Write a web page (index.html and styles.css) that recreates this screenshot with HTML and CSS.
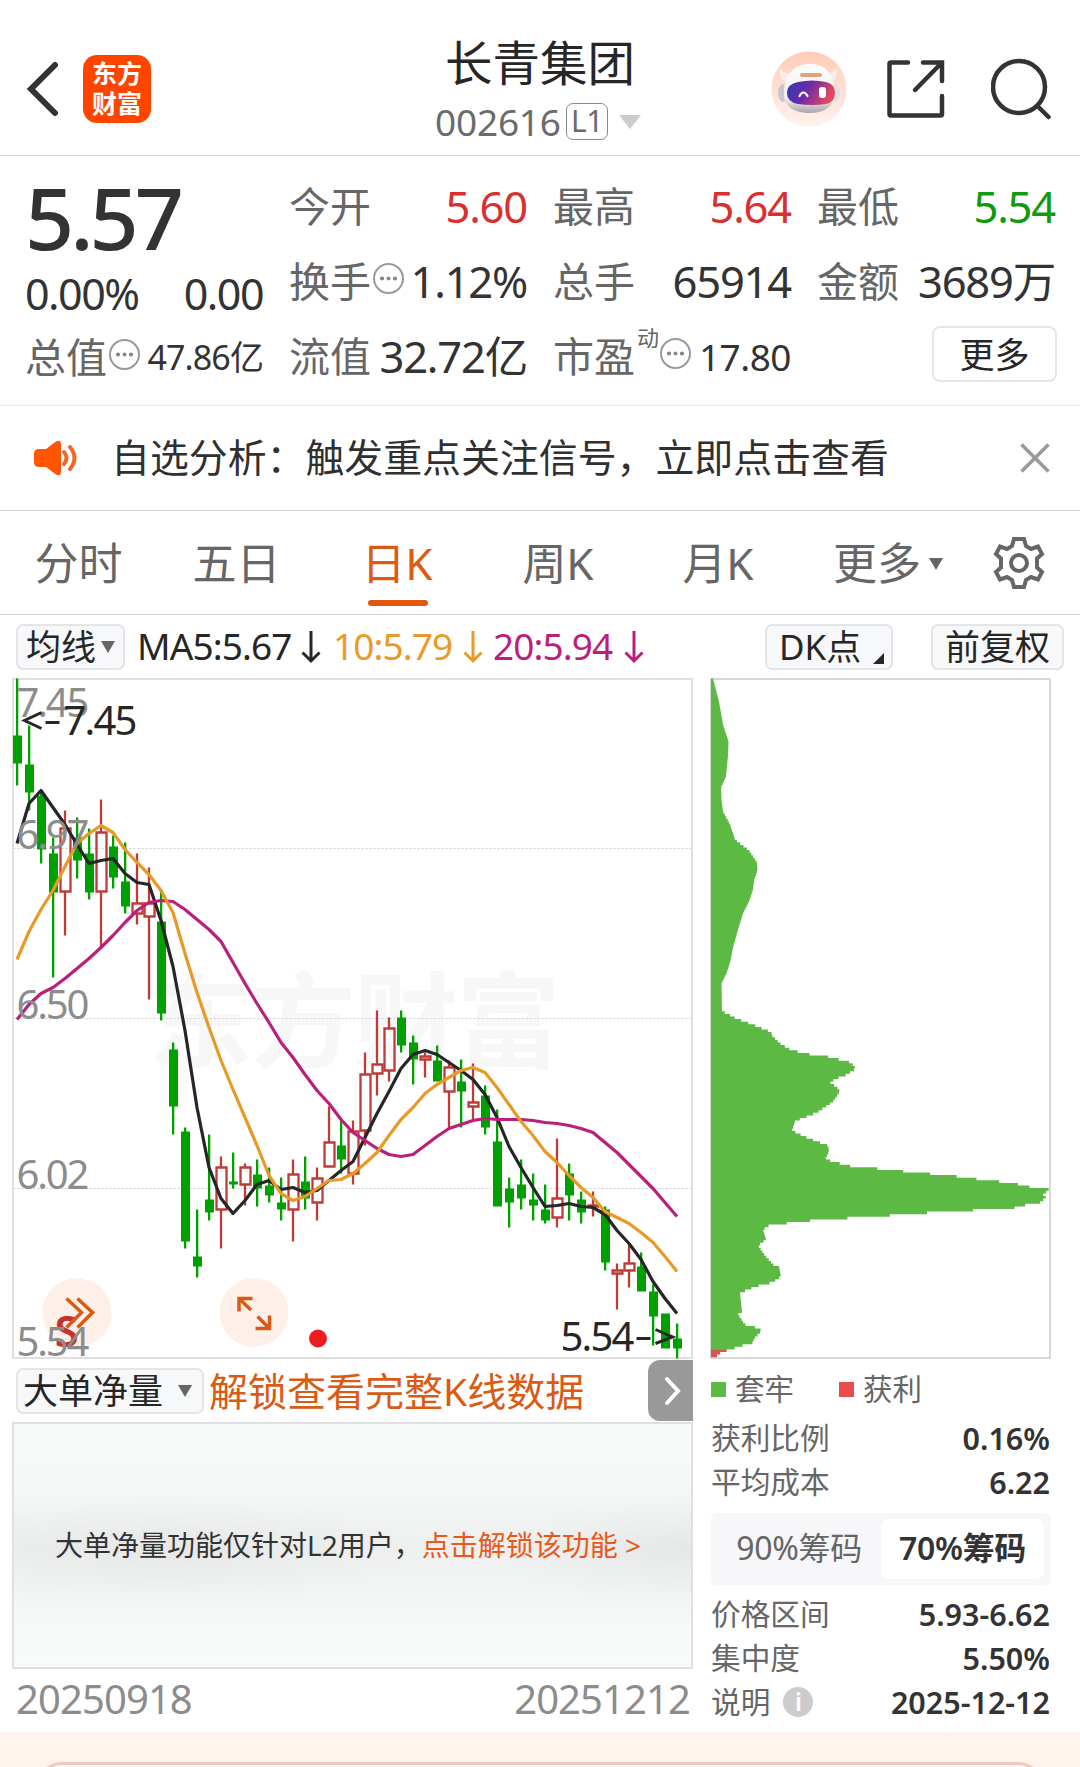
FILE: index.html
```html
<!DOCTYPE html>
<html lang="zh-CN">
<head>
    <meta charset="UTF-8">
    <title>长青集团 002616</title>
    <link rel="stylesheet" href="styles.css">
</head>
<body>
    <!-- Header -->
    <header class="header">
        <div class="header-left">
            <svg class="back" width="34" height="56" viewBox="0 0 34 56"><path d="M29 4 L5 28 L29 52"/></svg>
            <div class="logo"><span>东方</span><span>财富</span></div>
        </div>
        <div class="header-title">
            <h1>长青集团</h1>
            <div class="code">
                <span class="code-num">002616</span>
                <span class="level">L1</span>
                <span class="tri tri-light"></span>
            </div>
        </div>
        <div class="header-icons">
            <svg class="robot" width="76" height="76" viewBox="0 0 76 76">
                <defs>
                    <linearGradient id="skin" x1="0" y1="0" x2="0" y2="1">
                        <stop offset="0" stop-color="#ffccb5"/><stop offset="1" stop-color="#fff3ee"/>
                    </linearGradient>
                    <linearGradient id="visor" x1="0" y1="0" x2="1" y2="0.3">
                        <stop offset="0" stop-color="#2c3bb5"/><stop offset="0.5" stop-color="#6f2aa5"/><stop offset="1" stop-color="#e0485f"/>
                    </linearGradient>
                    <linearGradient id="shell" x1="0" y1="0" x2="0" y2="1">
                        <stop offset="0" stop-color="#ffffff"/><stop offset="0.7" stop-color="#eeeef0"/><stop offset="1" stop-color="#aaa5aa"/>
                    </linearGradient>
                </defs>
                <circle cx="38" cy="38" r="37.5" fill="url(#skin)"/>
                <path d="M9 17 Q7 26 14 30 L20 22 Q12 23 9 17Z M65 17 Q68 26 61 30 L54 22 Q62 23 65 17Z" fill="#f6efee"/>
                <ellipse cx="12" cy="42" rx="5" ry="9" fill="#cbc6cc"/>
                <ellipse cx="65" cy="42" rx="4" ry="8" fill="#e2dde0"/>
                <path d="M39 13 C54 13 60 22 63 33 C67 50 60 61 40 62 C22 62 12 55 13 41 C14 24 22 13 39 13Z" fill="url(#shell)"/>
                <rect x="29" y="22" width="22" height="4" rx="2" fill="#dca679"/>
                <path d="M27 31 Q41 28 55 31 Q64 33 64 42 Q64 51 55 53 Q41 55 27 53 Q16 51 16 42 Q16 33 27 31Z" fill="url(#visor)"/>
                <path d="M28.500 45 Q32.500 38 36.500 45" fill="none" stroke="#fff" stroke-width="2.200" stroke-linecap="round"/>
                <rect x="48" y="36" width="7" height="11" rx="3" fill="#fff"/>
            </svg>
            <svg class="line-icon share" width="60" height="60" viewBox="0 0 60 60">
                <path d="M22 3.500 H5 Q3.500 3.500 3.500 5 V55 Q3.500 56.500 5 56.500 H54.500 Q56 56.500 56 55 V37"/>
                <path d="M37 3.500 H56 V22 M56 3.500 L29 31"/>
            </svg>
            <svg class="line-icon search" width="60" height="62" viewBox="0 0 60 62">
                <circle cx="28" cy="29" r="26"/><path d="M46.500 48 L57.500 59"/>
            </svg>
        </div>
    </header>

    <!-- Quote -->
    <section class="quote">
        <div class="quote-main">
            <div class="price">5.57</div>
            <div class="change"><span>0.00%</span><span>0.00</span></div>
            <div class="cell cap"><span class="label">总值</span><i class="more-dot"></i><span class="value small">47.86亿</span></div>
        </div>
        <div class="quote-grid">
            <div class="cell"><span class="label">今开</span><span class="value up">5.60</span></div>
            <div class="cell"><span class="label">最高</span><span class="value up">5.64</span></div>
            <div class="cell"><span class="label">最低</span><span class="value down">5.54</span></div>
            <div class="cell"><span class="label">换手</span><i class="more-dot"></i><span class="value">1.12%</span></div>
            <div class="cell"><span class="label">总手</span><span class="value">65914</span></div>
            <div class="cell"><span class="label">金额</span><span class="value">3689万</span></div>
            <div class="cell"><span class="label">流值</span><span class="value">32.72亿</span></div>
            <div class="cell"><span class="label">市盈</span><sup>动</sup><i class="more-dot"></i><span class="value mid">17.80</span></div>
            <div class="cell"><button class="more-btn">更多</button></div>
        </div>
    </section>

    <!-- Notice -->
    <section class="notice">
        <svg class="speaker" width="46" height="38" viewBox="0 0 46 38">
            <path d="M6 10 H13 L23 2.500 Q28 0 28 6 V32 Q28 38 23 35.500 L13 28 H6 Q1 28 1 23 V15 Q1 10 6 10Z" fill="#ff5500"/>
            <path d="M31 13 Q36 19 31 25 M37 8 Q46 19 37 30" fill="none" stroke="#f0692a" stroke-width="4" stroke-linecap="round"/>
        </svg>
        <p>自选分析：触发重点关注信号，立即点击查看</p>
        <svg class="close" width="30" height="30" viewBox="0 0 30 30"><path d="M1.500 1.500 L28.500 28.500 M28.500 1.500 L1.500 28.500"/></svg>
    </section>

    <!-- Period tabs -->
    <nav class="tabs">
        <a>分时</a>
        <a>五日</a>
        <a class="active">日K</a>
        <a>周K</a>
        <a>月K</a>
        <a>更多<span class="tri"></span></a>
        <svg class="gear" width="54" height="54" viewBox="-27 -27 54 54">
            <path d="M-5 -24 H5 L7 -17 L12 -14 L19 -16.500 L23 -9 L18 -4.500 V4.500 L23 9 L19 16.500 L12 14 L7 17 L5 24 H-5 L-7 17 L-12 14 L-19 16.500 L-23 9 L-18 4.500 V-4.500 L-23 -9 L-19 -16.500 L-12 -14 L-7 -17Z"/>
            <circle r="8"/>
        </svg>
    </nav>

    <!-- Moving averages -->
    <div class="ma-bar">
        <button class="chip ma-btn">均线<span class="tri"></span></button>
        <span class="ma ma5">MA5:5.67</span>
        <svg class="arrow ma5" width="20" height="34" viewBox="0 0 20 34"><path d="M10 1 V31 M1.500 22.500 L10 31 L18.500 22.500"/></svg>
        <span class="ma ma10">10:5.79</span>
        <svg class="arrow ma10" width="20" height="34" viewBox="0 0 20 34"><path d="M10 1 V31 M1.500 22.500 L10 31 L18.500 22.500"/></svg>
        <span class="ma ma20">20:5.94</span>
        <svg class="arrow ma20" width="20" height="34" viewBox="0 0 20 34"><path d="M10 1 V31 M1.500 22.500 L10 31 L18.500 22.500"/></svg>
        <button class="chip dk-btn">DK点<span class="corner"></span></button>
        <button class="chip fq-btn">前复权</button>
    </div>

    <main class="content">
        <div class="left">
            <svg class="kline" id="kline" width="681" height="681" viewBox="11.500 677.500 681 681">
                <text class="watermark" x="148" y="1059" textLength="412">东方财富</text>
                <path class="grid-line" d="M13 848 H692 M13 1018 H692 M13 1188 H692"/>
                <rect class="frame" x="12.500" y="678.500" width="679" height="679"/>
                <g id="candles"></g>
                <g id="lines"></g>
                <circle cx="76.500" cy="1312" r="34.500" class="bubble"/>
                <circle cx="253.500" cy="1312" r="34.500" class="bubble"/>
                <text class="sell" x="54" y="1346">S</text>
                <path class="bubble-icon" d="M66 1298 L81 1312 L66 1327 M77 1298 L92 1312 L77 1327"/>
                <path class="bubble-icon" d="M238.500 1311 V1298 H252 M239 1298.500 L250.500 1309.500 M255 1328 H269 V1315 M268.500 1327.500 L257 1316"/>
                <circle cx="317.500" cy="1338" r="9" fill="#ee1c1c"/>
                <g class="axis">
                    <text x="16" y="716" textLength="73">7.45</text>
                    <text x="16" y="848" textLength="73">6.97</text>
                    <text x="16" y="1018" textLength="73">6.50</text>
                    <text x="16" y="1188" textLength="73">6.02</text>
                    <text x="16" y="1355" textLength="73">5.54</text>
                </g>
                <text class="mark" x="63" y="734" textLength="74">7.45</text>
                <text class="mark" x="560" y="1350" textLength="74">5.54</text>
                <path class="mark-arrow" d="M41 712 L24 720 L41 728 M45 722 H59 M655 1329 L672 1336.500 L655 1343 M636 1338 H650"/>
            </svg>

            <div class="sub-bar">
                <button class="chip vol-btn">大单净量<span class="tri"></span></button>
                <span class="unlock">解锁查看完整K线数据</span>
                <span class="next"><svg width="18" height="30" viewBox="0 0 18 30"><path d="M3 3 L14 15 L3 27"/></svg></span>
            </div>

            <div class="locked">
                <span>大单净量功能仅针对L2用户，</span><a>点击解锁该功能 &gt;</a>
            </div>

            <div class="dates"><span>20250918</span><span>20251212</span></div>
        </div>

        <aside class="right">
            <svg class="chips" id="chips" width="341" height="681" viewBox="709.500 677.500 341 681">
                <rect class="chips-frame" x="710.500" y="678.500" width="339" height="679"/>
                <path id="chips-green" fill="#5bb944"/>
                <path id="chips-red" fill="#d9534f"/>
            </svg>
            <div class="legend">
                <i class="sq green"></i><span>套牢</span>
                <i class="sq red"></i><span>获利</span>
            </div>
            <div class="stat"><span>获利比例</span><b>0.16%</b></div>
            <div class="stat"><span>平均成本</span><b>6.22</b></div>
            <div class="switch">
                <span>90%筹码</span>
                <span class="on">70%筹码</span>
            </div>
            <div class="stat"><span>价格区间</span><b>5.93-6.62</b></div>
            <div class="stat"><span>集中度</span><b>5.50%</b></div>
            <div class="stat"><span>说明<i class="info">i</i></span><b>2025-12-12</b></div>
        </aside>
    </main>

    <footer class="footer"><div class="footer-card"></div></footer>

    <script src="chart.js"></script>
</body>
</html>
```

FILE: styles.css
```css
/* Reset and font */
* {
    margin: 0;
    padding: 0;
    box-sizing: border-box;
}

body {
    width: 1080px;
    height: 1767px;
    overflow: hidden;
    background: #fff;
    color: #333;
    font-family: "Noto Sans", "Noto Sans CJK SC", sans-serif;
    line-height: 1;
    white-space: nowrap;
}

button {
    font-family: inherit;
    line-height: 1;
    color: #262626;
}

svg {
    display: block;
    flex-shrink: 0;
}

.tri {
    display: inline-block;
    border: 7px solid transparent;
    border-top: 12px solid #666;
    border-bottom: 0;
}

.tri-light {
    border-width: 14px 11px 0;
    border-top-color: #ccc;
}

/* Header */
.header {
    display: grid;
    grid-template-columns: 360px 360px 360px;
    height: 156px;
    border-bottom: 1px solid #d4d4d4;
}

.header-left {
    display: flex;
    align-items: center;
    padding: 22px 0 0 26px;
}

.back path {
    fill: none;
    stroke: #333;
    stroke-width: 6;
    stroke-linecap: round;
}

.logo {
    display: flex;
    flex-direction: column;
    align-items: center;
    gap: 5px;
    width: 68px;
    height: 68px;
    margin-left: 23px;
    padding-top: 6px;
    border-radius: 14px;
    background: #ff4400;
    color: #fff;
    font-size: 25px;
    font-weight: 700;
}

.header-title {
    padding-top: 39px;
}

h1 {
    font-size: 47.5px;
    font-weight: 400;
    text-align: center;
    color: #262626;
}

.code {
    display: flex;
    align-items: center;
    margin: 16px 0 0 75px;
    color: #6b6b6b;
}

.code-num {
    width: 131px;
    font-size: 37px;
    letter-spacing: -0.2px;
}

.level {
    width: 42px;
    height: 37px;
    border: 1.5px solid #8a8a8a;
    border-radius: 7px;
    font-size: 30px;
    line-height: 33px;
    letter-spacing: -0.5px;
    text-align: center;
}

.code .tri-light {
    margin: 2px 0 0 11px;
}

.header-icons {
    display: flex;
    align-items: center;
    padding: 22px 0 0 51px;
}

.line-icon {
    fill: none;
    stroke: #333;
    stroke-width: 4.5;
    stroke-linecap: round;
}

.share {
    margin-left: 39px;
}

.search {
    margin-left: 45px;
}

/* Quote */
.quote {
    display: flex;
    gap: 26px;
    height: 250px;
    padding-left: 25px;
    border-bottom: 1px solid #e8e8e8;
}

.quote-main {
    width: 238px;
}

.price {
    height: 105px;
    padding-top: 18px;
    font-size: 86px;
    font-weight: 500;
    letter-spacing: -4px;
}

.change {
    display: flex;
    justify-content: space-between;
    height: 63px;
    padding-top: 11px;
    font-size: 43px;
    letter-spacing: -1.5px;
}

.quote-grid {
    display: grid;
    grid-template-columns: 238px 238px 238px;
    grid-template-rows: 75px 75px 75px;
    column-gap: 26px;
    padding-top: 13px;
}

.cell {
    display: flex;
    align-items: center;
}

.cap {
    height: 66px;
}

.label {
    font-size: 41px;
    color: #666;
}

.value {
    margin-left: auto;
    font-size: 43.5px;
    letter-spacing: -1.2px;
}

.value.small {
    font-size: 34px;
    letter-spacing: -0.9px;
}

.value.mid {
    font-size: 37px;
    letter-spacing: -0.5px;
}

.up {
    color: #d9302f;
}

.down {
    color: #109a10;
}

.more-dot {
    width: 31px;
    height: 31px;
    margin: -6px 0 0 2px;
    border: 2px solid #999;
    border-radius: 50%;
    background:
        radial-gradient(circle at 7px 13.5px, #888 1.7px, transparent 2.3px),
        radial-gradient(circle at 13.5px 13.5px, #888 1.7px, transparent 2.3px),
        radial-gradient(circle at 20px 13.5px, #888 1.7px, transparent 2.3px);
}

sup {
    align-self: flex-start;
    margin: 7px -13px 0 2px;
    font-size: 22px;
    color: #666;
}

sup + .more-dot {
    margin-left: 14px;
}

.more-btn {
    width: 125px;
    height: 56px;
    margin: -5px -2px 0 auto;
    border: 2px solid #e6e6e6;
    border-radius: 8px;
    background: #fff;
    font-size: 35px;
}

/* Notice */
.notice {
    display: flex;
    align-items: center;
    height: 105px;
    padding: 0 30px 0 33px;
    border-bottom: 1px solid #d4d4d4;
}

.notice p {
    margin: -2px 0 0 32px;
    font-size: 38.9px;
    color: #303030;
}

.close {
    margin-left: auto;
}

.close path {
    stroke: #999;
    stroke-width: 3.5;
}

/* Tabs */
.tabs {
    display: grid;
    grid-template-columns: 157px 159px 162px 160px 160px 180px 82px;
    align-items: center;
    height: 104px;
    border-bottom: 1px solid #d4d4d4;
}

.tabs a {
    position: relative;
    font-size: 44px;
    text-align: center;
    color: #666;
}

.tabs .active {
    color: #dd5a12;
}

.tabs .active::after {
    content: "";
    position: absolute;
    left: 52px;
    bottom: -21px;
    width: 60px;
    height: 6px;
    border-radius: 3px;
    background: #e3570c;
}

.tabs .tri {
    margin: 0 0 10px 8px;
}

.gear {
    justify-self: center;
    fill: none;
    stroke: #666;
    stroke-width: 4;
}

/* MA bar */
.ma-bar {
    display: flex;
    align-items: center;
    height: 63px;
    padding: 0 16px;
}

.chip {
    display: flex;
    align-items: center;
    height: 46px;
    border: 2px solid #e4e5e9;
    border-radius: 7px;
    background: #f7f8fa;
    font-size: 35px;
}

.ma-btn {
    width: 109px;
    padding-left: 8px;
}

.ma-btn .tri {
    margin-left: 5px;
}

.ma {
    margin-top: -2px;
    font-size: 37px;
    letter-spacing: -0.9px;
}

.ma5 {
    color: #262626;
}

.ma10 {
    color: #ea9a26;
}

.ma20 {
    color: #bb1f7c;
}

.ma.ma5 {
    width: 164px;
    margin-left: 12px;
}

.ma.ma10 {
    width: 130px;
    margin-left: 12px;
}

.ma.ma20 {
    width: 131px;
    margin-left: 10px;
}

.dk-btn {
    width: 128px;
    margin-left: auto;
    padding-left: 12px;
}

.arrow path {
    fill: none;
    stroke: currentColor;
    stroke-width: 3;
}

.fq-btn {
    width: 133px;
    margin-left: 38px;
    padding-left: 12px;
}

.corner {
    align-self: flex-end;
    margin: 0 0 4px 12px;
    border-bottom: 11px solid #262626;
    border-left: 11px solid transparent;
}

/* Charts */
.content {
    display: flex;
    gap: 17px;
    height: 1054px;
    padding-left: 12px;
}

.left {
    width: 681px;
}

.watermark {
    font-size: 104px;
    font-weight: 700;
    fill: #f7f7f7;
}

.frame {
    fill: none;
    stroke: #e0e0e0;
    stroke-width: 2;
}

.grid-line {
    fill: none;
    stroke: #cfcfcf;
    stroke-width: 1;
    stroke-dasharray: 2 2;
}

.axis text {
    font-size: 40px;
    fill: #8c8c8c;
}

.mark {
    font-size: 40px;
    fill: #262626;
}

.mark-arrow {
    fill: none;
    stroke: #262626;
    stroke-width: 3;
}

.bubble {
    fill: #fef0e9;
}

.bubble-icon {
    fill: none;
    stroke: #d85a14;
    stroke-width: 3.5;
}

.sell {
    font-size: 44px;
    font-weight: 600;
    fill: #c9302c;
}

.candle-up {
    fill: none;
    stroke: #c03a3a;
    stroke-width: 2.3;
}

.candle-down {
    fill: #00a000;
    stroke: none;
}

.average {
    fill: none;
    stroke-width: 3.2;
    stroke-linejoin: round;
}

.sub-bar {
    display: flex;
    align-items: center;
    height: 63px;
    padding-left: 4px;
}

.vol-btn {
    width: 188px;
    padding-left: 5px;
}

.vol-btn .tri {
    margin-left: 15px;
}

.unlock {
    margin: -1px 0 0 5px;
    font-size: 39px;
    color: #d95b14;
}

.next {
    display: flex;
    align-items: center;
    justify-content: center;
    width: 45px;
    height: 61px;
    margin-left: auto;
    padding-left: 4px;
    border-radius: 12px 0 0 12px;
    background: #999;
}

.next path {
    fill: none;
    stroke: #fff;
    stroke-width: 4;
    stroke-linecap: round;
}

.locked {
    display: flex;
    align-items: center;
    height: 247px;
    padding: 0 0 2px 41px;
    border: 2px solid #e0e0e0;
    background:
        radial-gradient(ellipse 260px 60px at 22% 53%, rgba(0, 0, 0, 0.035), transparent),
        radial-gradient(ellipse 200px 60px at 100% 53%, rgba(0, 0, 0, 0.035), transparent),
        linear-gradient(#f8f9f9, #f6f7f7 25%, #eeefef 50%, #f6f7f7 78%, #f9fafa);
    font-size: 28px;
}

.locked a {
    color: #e8591a;
}

.dates {
    display: flex;
    justify-content: space-between;
    padding: 10px 3px 0 4px;
    font-size: 40px;
    letter-spacing: -0.9px;
    color: #8c8c8c;
}

/* Chip distribution */
.right {
    width: 341px;
}

.chips-frame {
    fill: none;
    stroke: #ccc;
    stroke-width: 1.5;
}

.legend {
    display: flex;
    align-items: center;
    height: 57px;
    padding: 3px 0 0 1px;
    font-size: 29.5px;
    color: #666;
}

.sq {
    width: 15px;
    height: 15px;
    margin-right: 9px;
}

.green {
    background: #5bb944;
}

.red {
    margin-left: 45px;
    background: #e84b4b;
}

.stat {
    display: flex;
    align-items: center;
    justify-content: space-between;
    height: 44px;
    padding: 0 1px;
    font-size: 29.7px;
    color: #666;
}

.stat span {
    display: flex;
    align-items: center;
}

.stat b {
    font-size: 30.5px;
    font-weight: 600;
    color: #333;
}

.info {
    width: 30px;
    height: 30px;
    margin-left: 13px;
    border-radius: 50%;
    background: #ccc;
    color: #fff;
    font-size: 26px;
    font-style: normal;
    font-weight: 600;
    line-height: 28px;
    text-align: center;
}

.switch {
    display: grid;
    grid-template-columns: 164px 163px;
    height: 72px;
    margin: 9px 0 7px 1px;
    padding: 6px;
    border-radius: 6px;
    background: #f7f7fa;
    font-size: 32px;
    letter-spacing: -0.3px;
    line-height: 58px;
    text-align: center;
    color: #666;
}

.switch .on {
    border-radius: 8px;
    background: #fff;
    color: #333;
    font-weight: 600;
}

/* Footer */
.footer {
    height: 40px;
    padding: 30px 36px 0;
    background: #fff3ee;
}

.footer-card {
    height: 60px;
    border: 3px solid #f1c8bd;
    border-radius: 26px;
    background: #fff8f4;
}
```

FILE: chart.js
```js
const NS = 'http://www.w3.org/2000/svg';
const STEP = 12;
const START = 16.5;

// direction, high, body top, body bottom, low
const candles = [
    ['d', 678, 735, 763, 785], ['d', 725, 764, 792, 810], ['d', 790, 795, 849, 863], ['d', 837, 853, 892, 977],
    ['u', 810, 827, 892, 935], ['d', 817, 837, 860, 878], ['d', 828, 853, 892, 899], ['u', 799, 831, 892, 948],
    ['d', 835, 846, 877, 888], ['d', 842, 881, 906, 913], ['u', 853, 902, 914, 924], ['u', 867, 902, 917, 999],
    ['d', 890, 921, 1013, 1020], ['d', 1042, 1049, 1106, 1134], ['d', 1127, 1131, 1241, 1248], ['d', 1209, 1256, 1266, 1277],
    ['d', 1134, 1199, 1212, 1220], ['u', 1156, 1166, 1210, 1248], ['d', 1152, 1181, 1184, 1188], ['u', 1163, 1166, 1185, 1205],
    ['d', 1159, 1174, 1188, 1206], ['d', 1167, 1185, 1195, 1202], ['d', 1177, 1202, 1209, 1220], ['u', 1159, 1173, 1210, 1241],
    ['d', 1156, 1181, 1198, 1209], ['u', 1167, 1177, 1203, 1220], ['u', 1106, 1141, 1167, 1167], ['d', 1120, 1145, 1159, 1173],
    ['u', 1120, 1130, 1174, 1184], ['u', 1052, 1073, 1131, 1145], ['u', 1010, 1063, 1074, 1095], ['u', 1017, 1027, 1071, 1081],
    ['d', 1010, 1017, 1045, 1052], ['d', 1035, 1042, 1059, 1084], ['u', 1052, 1055, 1060, 1077], ['d', 1045, 1060, 1081, 1081],
    ['u', 1060, 1066, 1092, 1128], ['d', 1059, 1081, 1091, 1127], ['u', 1063, 1101, 1107, 1120], ['d', 1085, 1095, 1127, 1134],
    ['d', 1109, 1141, 1206, 1206], ['d', 1177, 1188, 1202, 1227], ['d', 1159, 1184, 1198, 1209], ['d', 1173, 1199, 1205, 1220],
    ['d', 1184, 1209, 1220, 1223], ['u', 1138, 1197, 1218, 1227], ['d', 1163, 1173, 1195, 1220], ['d', 1191, 1199, 1212, 1223],
    ['u', 1191, 1204, 1207, 1216], ['d', 1206, 1209, 1262, 1270], ['u', 1263, 1269, 1274, 1309], ['u', 1245, 1262, 1271, 1287],
    ['d', 1252, 1266, 1291, 1291], ['d', 1284, 1291, 1316, 1345], ['d', 1313, 1313, 1348, 1348], ['d', 1323, 1338, 1348, 1358]
];

const averages = [
    { color: '#262626', points: [843, 803, 790, 807, 824, 844, 863, 860, 858, 873, 882, 884, 920, 966, 1030, 1107, 1167, 1198, 1213, 1200, 1184, 1180, 1189, 1187, 1192, 1190, 1180, 1170, 1161, 1137, 1113, 1091, 1068, 1054, 1050, 1054, 1062, 1070, 1079, 1094, 1117, 1146, 1167, 1187, 1206, 1205, 1203, 1206, 1207, 1214, 1230, 1243, 1259, 1281, 1298, 1313] },
    { color: '#bb1f7c', points: [1019, 1004, 993, 987, 978, 968, 958, 947, 935, 922, 910, 902, 900, 901, 909, 919, 929, 941, 962, 983, 1003, 1022, 1042, 1057, 1074, 1090, 1103, 1119, 1132, 1140, 1148, 1154, 1156, 1154, 1145, 1136, 1128, 1124, 1120, 1118, 1119, 1119, 1119, 1120, 1122, 1123, 1125, 1128, 1132, 1142, 1152, 1164, 1176, 1188, 1202, 1216] },
    { color: '#e89a28', points: [959, 931, 909, 890, 866, 843, 833, 825, 832, 849, 862, 874, 890, 912, 953, 992, 1027, 1060, 1089, 1117, 1145, 1175, 1193, 1200, 1196, 1188, 1180, 1179, 1173, 1163, 1152, 1135, 1119, 1107, 1093, 1084, 1077, 1070, 1067, 1072, 1087, 1104, 1121, 1135, 1151, 1162, 1175, 1187, 1197, 1211, 1217, 1223, 1232, 1242, 1256, 1271] }
];

// y, bar length
const profile = [
    [678, 2], [701, 8], [724, 12], [741, 17.5], [755, 17], [776, 15], [787, 10], [799, 10.5], [811, 12], [824, 19],
    [839, 24], [850, 38], [862, 46], [870, 46.5], [880, 43], [889, 42], [901, 38], [913, 32], [929, 27], [947, 22],
    [962, 19], [974, 15], [983, 10.5], [1011, 11], [1013, 16], [1018, 25], [1025, 44], [1032, 61], [1034, 60], [1043, 69],
    [1049, 79], [1052, 90], [1054, 100], [1056, 116], [1059, 128], [1062, 140], [1068, 145], [1074, 136], [1078, 125], [1082, 119],
    [1087, 126], [1091, 129], [1101, 122], [1112, 106], [1119, 88], [1121, 84], [1130, 81], [1136, 93], [1141, 106], [1145, 117],
    [1151, 118], [1159, 114], [1162, 126], [1165, 135], [1167, 152], [1169, 178], [1172, 203], [1174, 228], [1177, 256], [1180, 275],
    [1182, 299], [1185, 313], [1188, 326], [1189, 339], [1191, 336], [1194, 332], [1197, 335], [1202, 329], [1204, 316], [1207, 305],
    [1209, 274], [1211, 240], [1213, 203], [1216, 165], [1218, 127], [1220, 100], [1223, 73], [1225, 58], [1229, 52], [1239, 55],
    [1245, 47], [1255, 54], [1265, 63], [1266, 68], [1276, 70], [1282, 61], [1284, 51], [1287, 42], [1290, 35], [1292, 29],
    [1311, 31], [1314, 27], [1320, 31], [1324, 34], [1327, 45], [1330, 51], [1337, 44], [1343, 41], [1345, 31], [1348, 22],
    [1352, 10], [1357, 4]
];

function add(parent, tag, attrs) {
    const el = document.createElementNS(NS, tag);
    for (const key in attrs) el.setAttribute(key, attrs[key]);
    parent.appendChild(el);
}

function drawCandles() {
    const group = document.getElementById('candles');
    candles.forEach(([dir, high, top, bottom, low], i) => {
        const x = START + i * STEP;
        if (dir === 'd') {
            add(group, 'path', {
                class: 'candle-down',
                d: `M${x - 1} ${high}h2.3V${low}h-2.3Z M${x - 4} ${top}h9V${bottom}h-9Z`
            });
        } else {
            add(group, 'path', {
                class: 'candle-up',
                d: `M${x} ${high}V${top} M${x} ${bottom}V${low} M${x - 4.5} ${top + 1}h10V${bottom - 1}h-10Z`
            });
        }
    });
}

function drawAverages() {
    const group = document.getElementById('lines');
    averages.forEach(({ color, points }) => {
        add(group, 'polyline', {
            class: 'average',
            stroke: color,
            points: points.map((y, i) => `${START + i * STEP},${y}`).join(' ')
        });
    });
}

function barLength(y) {
    for (let i = 1; i < profile.length; i++) {
        const [y0, w0] = profile[i - 1];
        const [y1, w1] = profile[i];
        if (y <= y1) return w0 + (w1 - w0) * (y - y0) / (y1 - y0);
    }
    return 0;
}

function drawChips() {
    const bar = 2.6;
    let green = '';
    let red = '';
    for (let y = 678; y < 1356; y += bar) {
        const piece = `M710.5 ${y.toFixed(1)}h${barLength(y + bar / 2).toFixed(1)}v2.7H710.5Z`;
        if (y < 1348) green += piece;
        else red += piece;
    }
    document.getElementById('chips-green').setAttribute('d', green);
    document.getElementById('chips-red').setAttribute('d', red);
}

drawCandles();
drawAverages();
drawChips();
```
